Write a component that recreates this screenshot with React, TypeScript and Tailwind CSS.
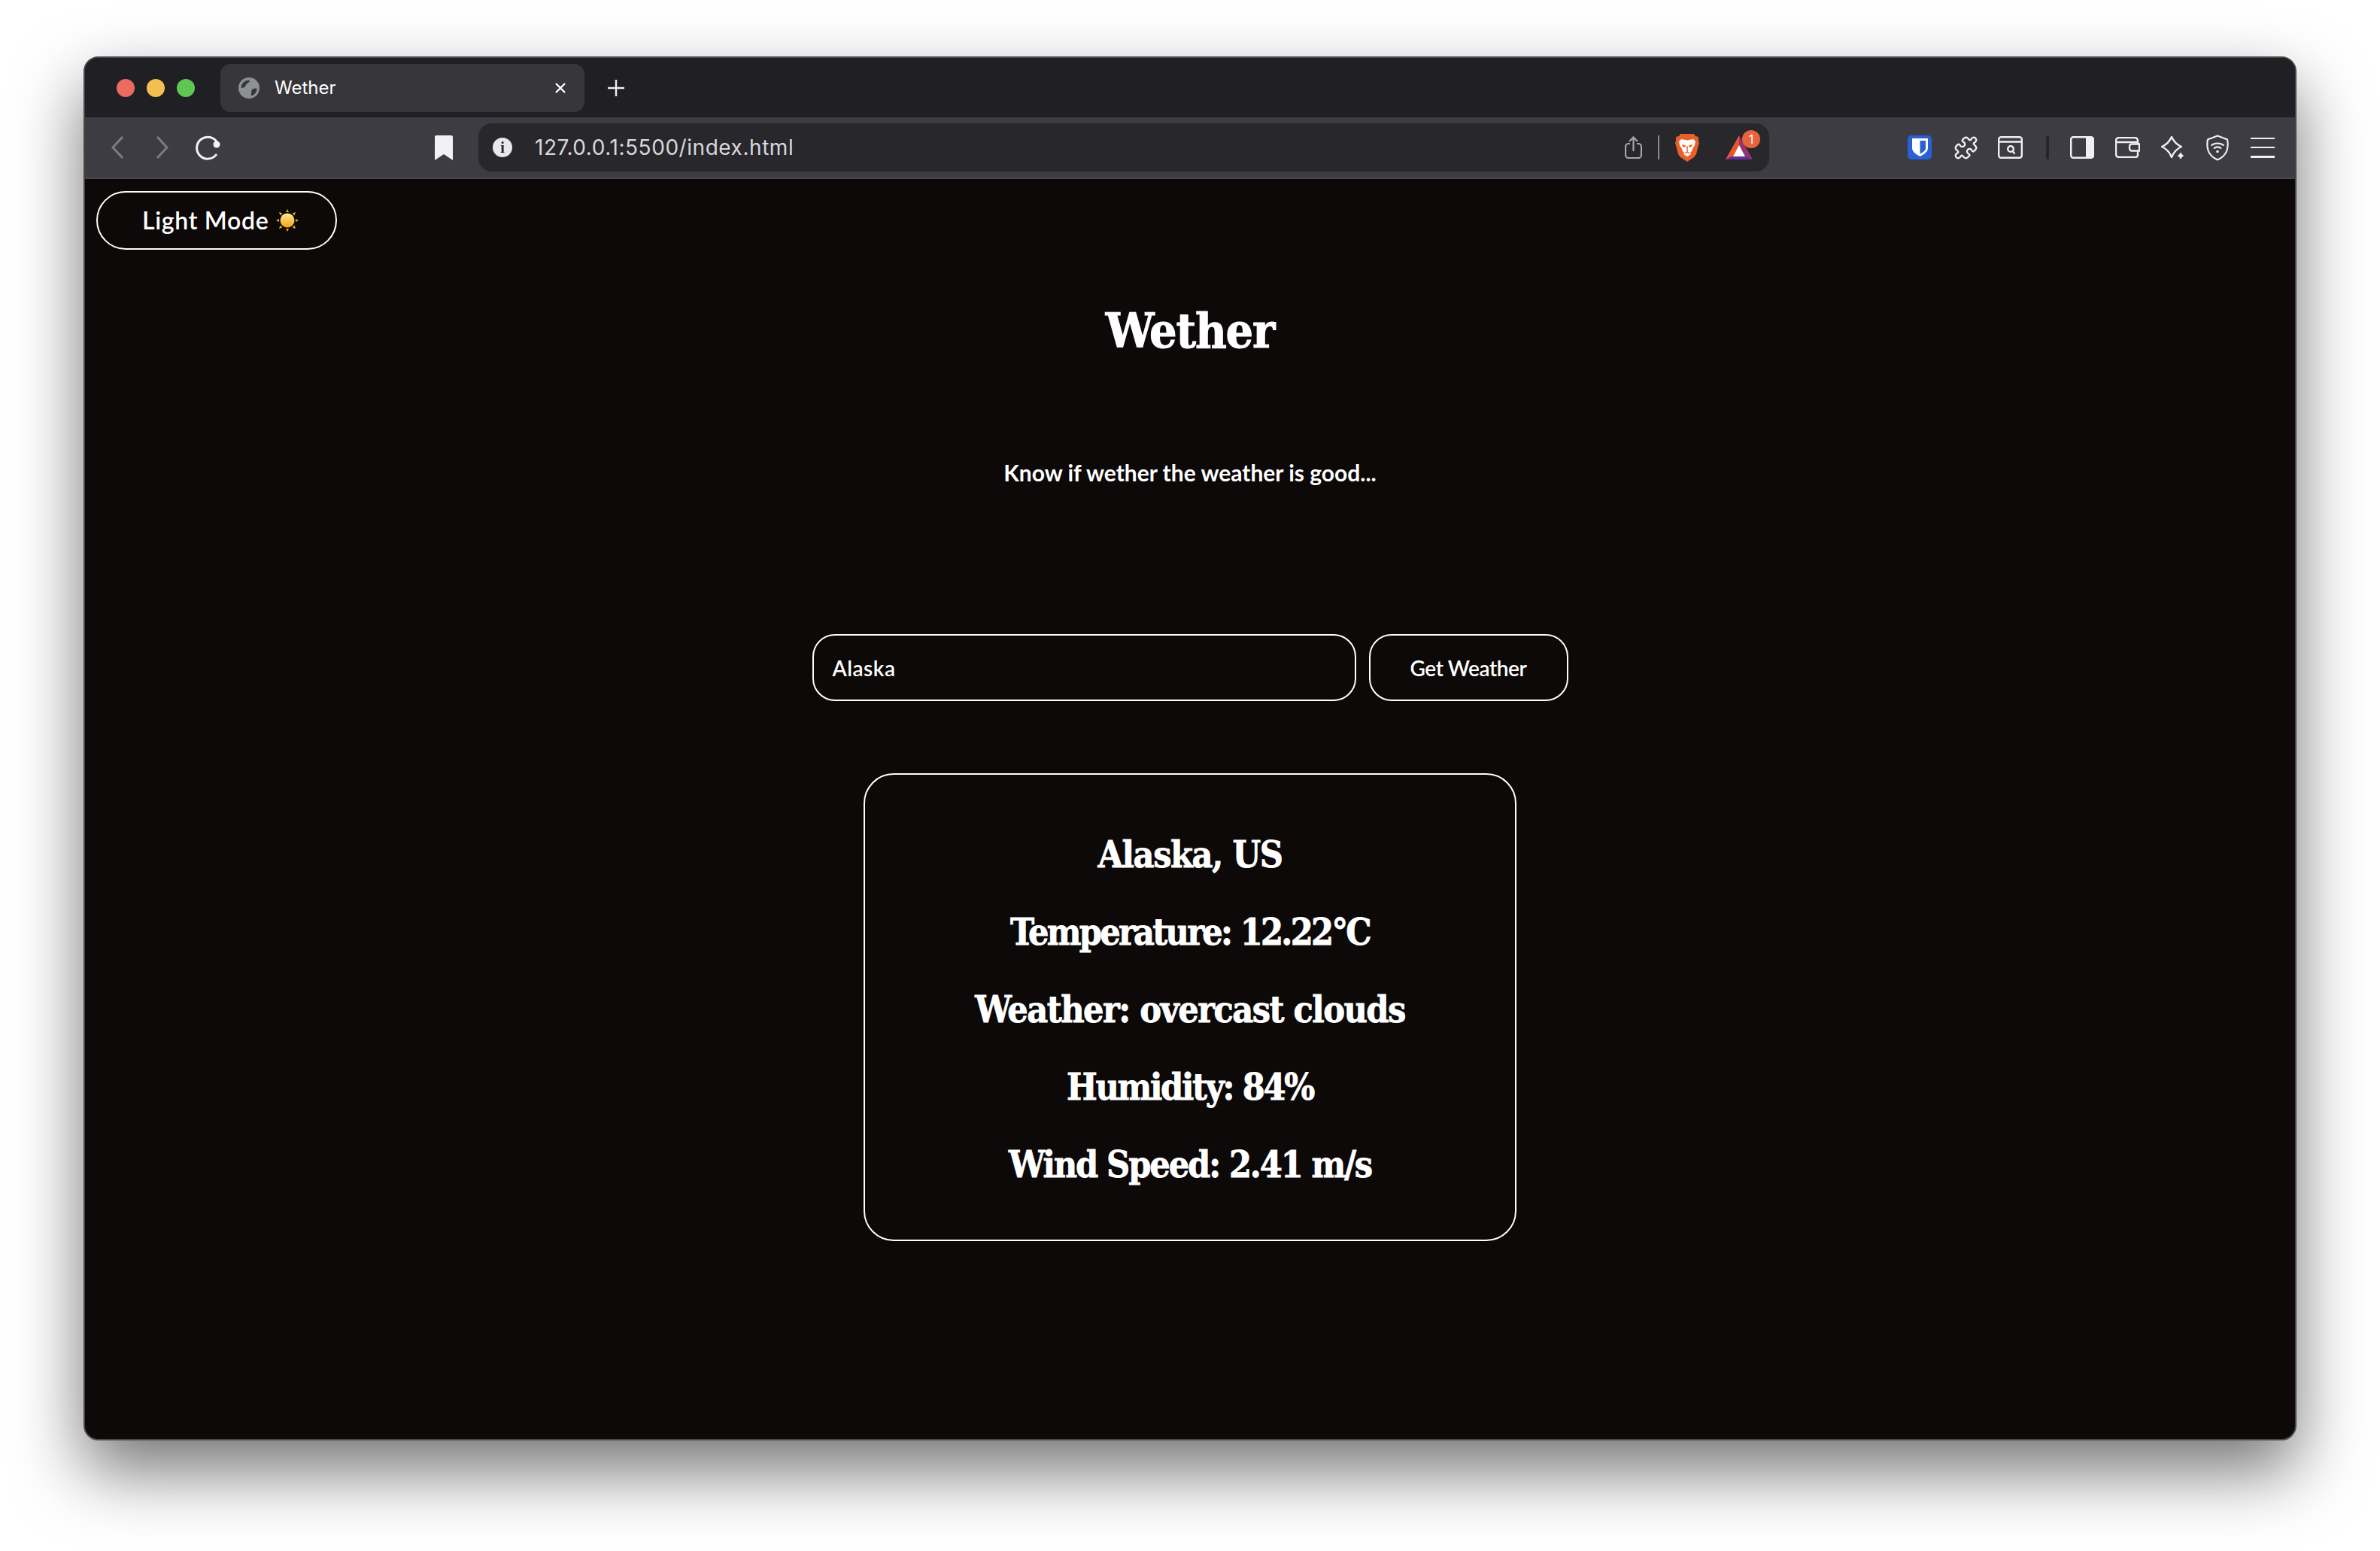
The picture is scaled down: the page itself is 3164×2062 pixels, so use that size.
const BraveLion = () => (
  <svg width="32" height="37" viewBox="0 0 32 37">
    <path d="M7 0h18l2 3 4 1v5l1 3-2 7-2 8-3 4-9 6-9-6-3-4-2-8-2-7 1-3V4l4-1z" fill="#e8602c" />
    <path d="M8 7l8 1.500L24 7l3 3-1 5-3 5-1 3-2 2 1 2-5 3-5-3 1-2-2-2-1-3-3-5-1-5z" fill="#fff" />
    <path d="M9 14l5 1.500-1 2.500-3-1zM23 14l-5 1.500 1 2.500 3-1z" fill="#e8602c" />
    <path d="M16 16v9M13 26l3-2 3 2" stroke="#e8602c" strokeWidth="1.500" fill="none" />
  </svg>
);

const AttentionTriangle = () => (
  <svg width="36" height="32" viewBox="0 0 36 32">
    <path d="M18 0L0 32l18-3z" fill="#e8562c" />
    <path d="M18 0l18 32-18-3z" fill="#97336b" />
    <path d="M0 32l8-4h20l8 4z" fill="#5f2f96" />
    <path d="M18 13l8 15H10z" fill="#fff" />
  </svg>
);

const Sun = () => (
  <svg width="30" height="30" viewBox="0 0 30 30">
    <defs>
      <linearGradient id="sunFill" x1="0" y1="0" x2="0" y2="1">
        <stop offset="0" stopColor="#fdeb9a" />
        <stop offset="1" stopColor="#f4a30f" />
      </linearGradient>
    </defs>
    <path d="M15 0l2 4h-4zM15 30l-2-4h4zM0 15l4-2v4zM30 15l-4 2v-4zM4 4l4.500 1.500-3 3zM26 4l-1.500 4.500-3-3zM4 26l1.500-4.500 3 3zM26 26l-4.500-1.500 3-3z" fill="#e9a81a" />
    <circle cx="15" cy="15" r="9.500" fill="url(#sunFill)" />
  </svg>
);

const iconStroke = "#f0f0f2";

export default function App() {
  return (
    <div className="h-[2062px] w-[3164px] overflow-hidden bg-white pl-[111px] pt-[75px]">
      <div className="flex h-[1840px] w-[2942px] flex-col overflow-hidden rounded-[20px] border-2 border-[#48484a] bg-[#0c0908] shadow-[0_40px_90px_rgba(0,0,0,0.55)] font-['Inter',sans-serif]">
        {/* tab strip */}
        <div className="flex h-[79px] shrink-0 items-center bg-[#1f1f24] pl-[42px]">
          <div className="flex gap-4">
            <span className="h-6 w-6 rounded-full bg-[#ed6a5e]" />
            <span className="h-6 w-6 rounded-full bg-[#f4bf4f]" />
            <span className="h-6 w-6 rounded-full bg-[#61c554]" />
          </div>
          <div className="ml-[34px] flex h-16 w-[484px] items-center rounded-[14px] bg-[#36363b] px-6">
            <svg width="28" height="28" viewBox="0 0 28 28">
              <circle cx="14" cy="14" r="14" fill="#8e9094" />
              <path d="M3.500 14A10.500 10.500 0 0 1 14 3.500c2 2-1 4-3 5s-1 4-3 4.500-3 1-4.500 1zM24.500 15c-3-1-6 0-7 2s1 3-1 5l1 2.300a10.500 10.500 0 0 0 7-9.300z" fill="#36363b" />
            </svg>
            <span className="ml-5 flex-1 text-[24px] text-white">Wether</span>
            <svg width="16" height="16" viewBox="0 0 16 16" className="text-white">
              <path d="M2 2l12 12M14 2L2 14" stroke="currentColor" strokeWidth="2.400" />
            </svg>
          </div>
          <svg width="24" height="24" viewBox="0 0 24 24" className="ml-[30px] text-[#eee]">
            <path d="M12 1v22M1 12h22" stroke="currentColor" strokeWidth="2.400" />
          </svg>
        </div>
        {/* toolbar */}
        <div className="flex h-[82px] shrink-0 items-center border-b-2 border-[#47474d] bg-[#3c3c42]">
          <div className="flex w-[523px] shrink-0 items-center">
            <svg width="20" height="32" viewBox="0 0 20 32" className="ml-[33px] text-[#7c7c80]">
              <path d="M17 2L4 16l13 14" fill="none" stroke="currentColor" strokeWidth="3" />
            </svg>
            <svg width="20" height="32" viewBox="0 0 20 32" className="ml-[40px] text-[#7c7c80]">
              <path d="M3 2l13 14L3 30" fill="none" stroke="currentColor" strokeWidth="3" />
            </svg>
            <svg width="34" height="34" viewBox="0 0 34 34" className="ml-[33px] text-[#f2f2f4]">
              <path d="M30 11A14.500 14.500 0 1 0 29 26" fill="none" stroke="currentColor" strokeWidth="3" />
              <circle cx="29" cy="13" r="4.500" fill="currentColor" />
            </svg>
            <svg width="24" height="33" viewBox="0 0 24 33" className="ml-[285px] text-[#f2f2f4]">
              <path d="M2 0h20a2 2 0 0 1 2 2v31l-12-8-12 8V2a2 2 0 0 1 2-2z" fill="currentColor" />
            </svg>
          </div>
          <div className="flex h-16 w-[1716px] shrink-0 items-center rounded-[18px] bg-[#27272c] pl-[19px] pr-[22px]">
            <span className="flex h-[26px] w-[26px] items-center justify-center rounded-full bg-[#e8e8ec] font-['Liberation_Serif',serif] text-[20px] font-bold text-[#27272c]">i</span>
            <span className="ml-[30px] flex-1 text-[28px] tracking-[0.55px] text-[#d8d8dc]">127.0.0.1:5500/index.html</span>
            <svg width="23" height="30" viewBox="0 0 23 30" className="text-[#a8a8ac]">
              <path d="M7 10H5a4 4 0 0 0-4 4v11a4 4 0 0 0 4 4h13a4 4 0 0 0 4-4V14a4 4 0 0 0-4-4h-2M11.500 20V2M6 7l5.500-5.500L17 7" fill="none" stroke="currentColor" strokeWidth="2.200" />
            </svg>
            <span className="ml-[21px] h-8 w-[2px] bg-[#8a8a8e]" />
            <span className="ml-[21px] flex"><BraveLion /></span>
            <span className="relative ml-[35px] flex">
              <AttentionTriangle />
              <span className="absolute -right-[10px] -top-[7px] flex h-[24px] w-[24px] items-center justify-center rounded-full bg-[#e8643c] text-[16px] text-white">1</span>
            </span>
          </div>
          <div className="flex flex-1 items-center pl-[184px]">
            <svg width="32" height="32" viewBox="0 0 32 32">
              <rect width="32" height="32" rx="5" fill="#2a5fd6" />
              <path d="M6 4h21v13c0 5-6 8.500-10.500 11C12 25.500 6 22 6 17z" fill="#fff" />
              <path d="M16.500 7H24v10c0 3-3.500 5.500-7.500 7.500z" fill="#2a5fd6" />
            </svg>
            <svg width="33" height="33" viewBox="0 0 24 24" className="ml-[29px]">
              <path d="M19.439 7.850c-.049.322.059.648.289.878l1.568 1.568c.47.47.706 1.087.706 1.704s-.235 1.233-.706 1.704l-1.611 1.611a.98.98 0 0 1-.837.276c-.47-.07-.802-.480-.968-.925a2.501 2.501 0 1 0-3.214 3.214c.446.166.855.497.925.968a.979.979 0 0 1-.276.837l-1.610 1.610a2.404 2.404 0 0 1-1.705.707 2.402 2.402 0 0 1-1.704-.706l-1.568-1.568a1.026 1.026 0 0 0-.877-.290c-.493.074-.840.504-1.020.968a2.500 2.500 0 1 1-3.237-3.237c.464-.180.894-.527.967-1.020a1.026 1.026 0 0 0-.289-.877l-1.568-1.568A2.402 2.402 0 0 1 1.998 12c0-.617.236-1.234.706-1.704L4.230 8.770c.24-.240.581-.353.917-.303.515.077.877.528 1.073 1.010a2.500 2.500 0 1 0 3.259-3.259c-.482-.196-.933-.558-1.010-1.073-.05-.336.062-.676.303-.917l1.525-1.525A2.402 2.402 0 0 1 12 1.998c.617 0 1.234.236 1.704.706l1.568 1.568c.23.230.556.338.877.290.493-.074.840-.504 1.020-.968a2.500 2.500 0 1 1 3.237 3.237c-.464.180-.894.527-.967 1.020z" fill="none" stroke={iconStroke} strokeWidth="1.700" strokeLinejoin="round" />
            </svg>
            <svg width="33" height="30" viewBox="0 0 33 30" className="ml-[26px]">
              <rect x="1.200" y="1.200" width="30.600" height="27.600" rx="3" fill="none" stroke={iconStroke} strokeWidth="2.400" />
              <path d="M2 7.500h29" stroke={iconStroke} strokeWidth="2.400" />
              <circle cx="17" cy="17" r="3.800" fill="none" stroke={iconStroke} strokeWidth="2.400" />
              <path d="M19.500 20l3 3.500" stroke={iconStroke} strokeWidth="2.400" />
            </svg>
            <span className="ml-[31px] h-8 w-1 rounded-sm bg-[#26262a]" />
            <svg width="32" height="30" viewBox="0 0 32 30" className="ml-[28px]">
              <rect x="1.200" y="1.200" width="29.600" height="27.600" rx="3" fill="none" stroke={iconStroke} strokeWidth="2.400" />
              <path d="M21 1h8a3 3 0 0 1 3 3v22a3 3 0 0 1-3 3h-8z" fill={iconStroke} />
            </svg>
            <svg width="33" height="28" viewBox="0 0 33 28" className="ml-[28px]">
              <path d="M30 9V5a4 4 0 0 0-4-4H5a4 4 0 0 0-4 4v18a4 4 0 0 0 4 4h22a3 3 0 0 0 3-3v-5M1.500 7H30" fill="none" stroke={iconStroke} strokeWidth="2.400" />
              <path d="M32 9.500H22a3 3 0 0 0-3 3v3a3 3 0 0 0 3 3h10z" fill="#3c3c42" stroke={iconStroke} strokeWidth="2.400" />
            </svg>
            <svg width="33" height="33" viewBox="0 0 33 33" className="ml-[27px]">
              <path d="M15 2Q19 11 28 15Q19 19 15 29Q11 19 2 15Q11 11 15 2z" fill="none" stroke={iconStroke} strokeWidth="2.400" strokeLinejoin="round" />
              <path d="M27 21q1 4 5 6q-4 2-5 6q-1-4-5-6q4-2 5-6z" fill={iconStroke} stroke="#3c3c42" strokeWidth="1" />
            </svg>
            <svg width="30" height="35" viewBox="0 0 30 35" className="ml-[28px]">
              <path d="M15 1.500L28 6.500c.8 4 .8 10-.5 14.500-2 6-7 10-12.500 12.500C9.500 31 4.500 27 2.500 21 1.200 16.500 1.200 10.500 2 6.500z" fill="none" stroke={iconStroke} strokeWidth="2.200" strokeLinejoin="round" />
              <path d="M6.500 14.500c5-4 12-4 17 0M10 18.500c3-2.500 7-2.500 10 0" fill="none" stroke={iconStroke} strokeWidth="2.200" />
              <circle cx="15" cy="22.500" r="1.800" fill={iconStroke} />
            </svg>
            <div className="ml-[29px] flex h-[27px] w-8 flex-col justify-between">
              <span className="h-[2.500px] bg-[#f0f0f2]" />
              <span className="h-[2.500px] bg-[#f0f0f2]" />
              <span className="h-[2.500px] bg-[#f0f0f2]" />
            </div>
          </div>
        </div>
        {/* page */}
        <div className="flex flex-1 flex-col items-center text-white">
          <button className="ml-[15px] mt-[16px] flex h-[78px] w-[320px] items-center gap-[10px] self-start rounded-[39px] border-[2.5px] border-white pl-[59px] font-['Lato',sans-serif] text-[32px] font-semibold tracking-[0.7px]">
            Light Mode <Sun />
          </button>
          <h1 className="mt-[59px] font-['DejaVu_Serif_Condensed','DejaVu_Serif',serif] text-[64px] font-bold leading-[98px] tracking-[-1.2px] [-webkit-text-stroke:1px_white]">Wether</h1>
          <p className="mt-[121px] font-['Lato',sans-serif] text-[30px] font-bold leading-[36px]">Know if wether the weather is good...</p>
          <div className="mt-[197px] flex gap-[17px]">
            <div className="flex h-[89px] w-[723px] items-center rounded-[30px] border-2 border-white pl-[25px] font-['Lato',sans-serif] text-[28px] font-semibold tracking-[0.5px]">Alaska</div>
            <button className="h-[89px] w-[265px] rounded-[30px] border-2 border-white font-['Lato',sans-serif] text-[28px] font-semibold tracking-[-0.4px]">Get Weather</button>
          </div>
          <div className="mt-[96px] flex h-[622px] w-[868px] flex-col items-center justify-center gap-[33px] rounded-[40px] border-2 border-white pt-[6px] font-['DejaVu_Serif_Condensed','DejaVu_Serif',serif] text-[48px] font-bold leading-[70px] [-webkit-text-stroke:0.8px_white]">
            <div className="tracking-[-1.4px]">Alaska, US</div>
            <div className="tracking-[-2.7px]">Temperature: 12.22°C</div>
            <div className="tracking-[-1.5px]">Weather: overcast clouds</div>
            <div className="tracking-[-2.3px]">Humidity: 84%</div>
            <div className="tracking-[-2.1px]">Wind Speed: 2.41 m/s</div>
          </div>
        </div>
      </div>
    </div>
  );
}
